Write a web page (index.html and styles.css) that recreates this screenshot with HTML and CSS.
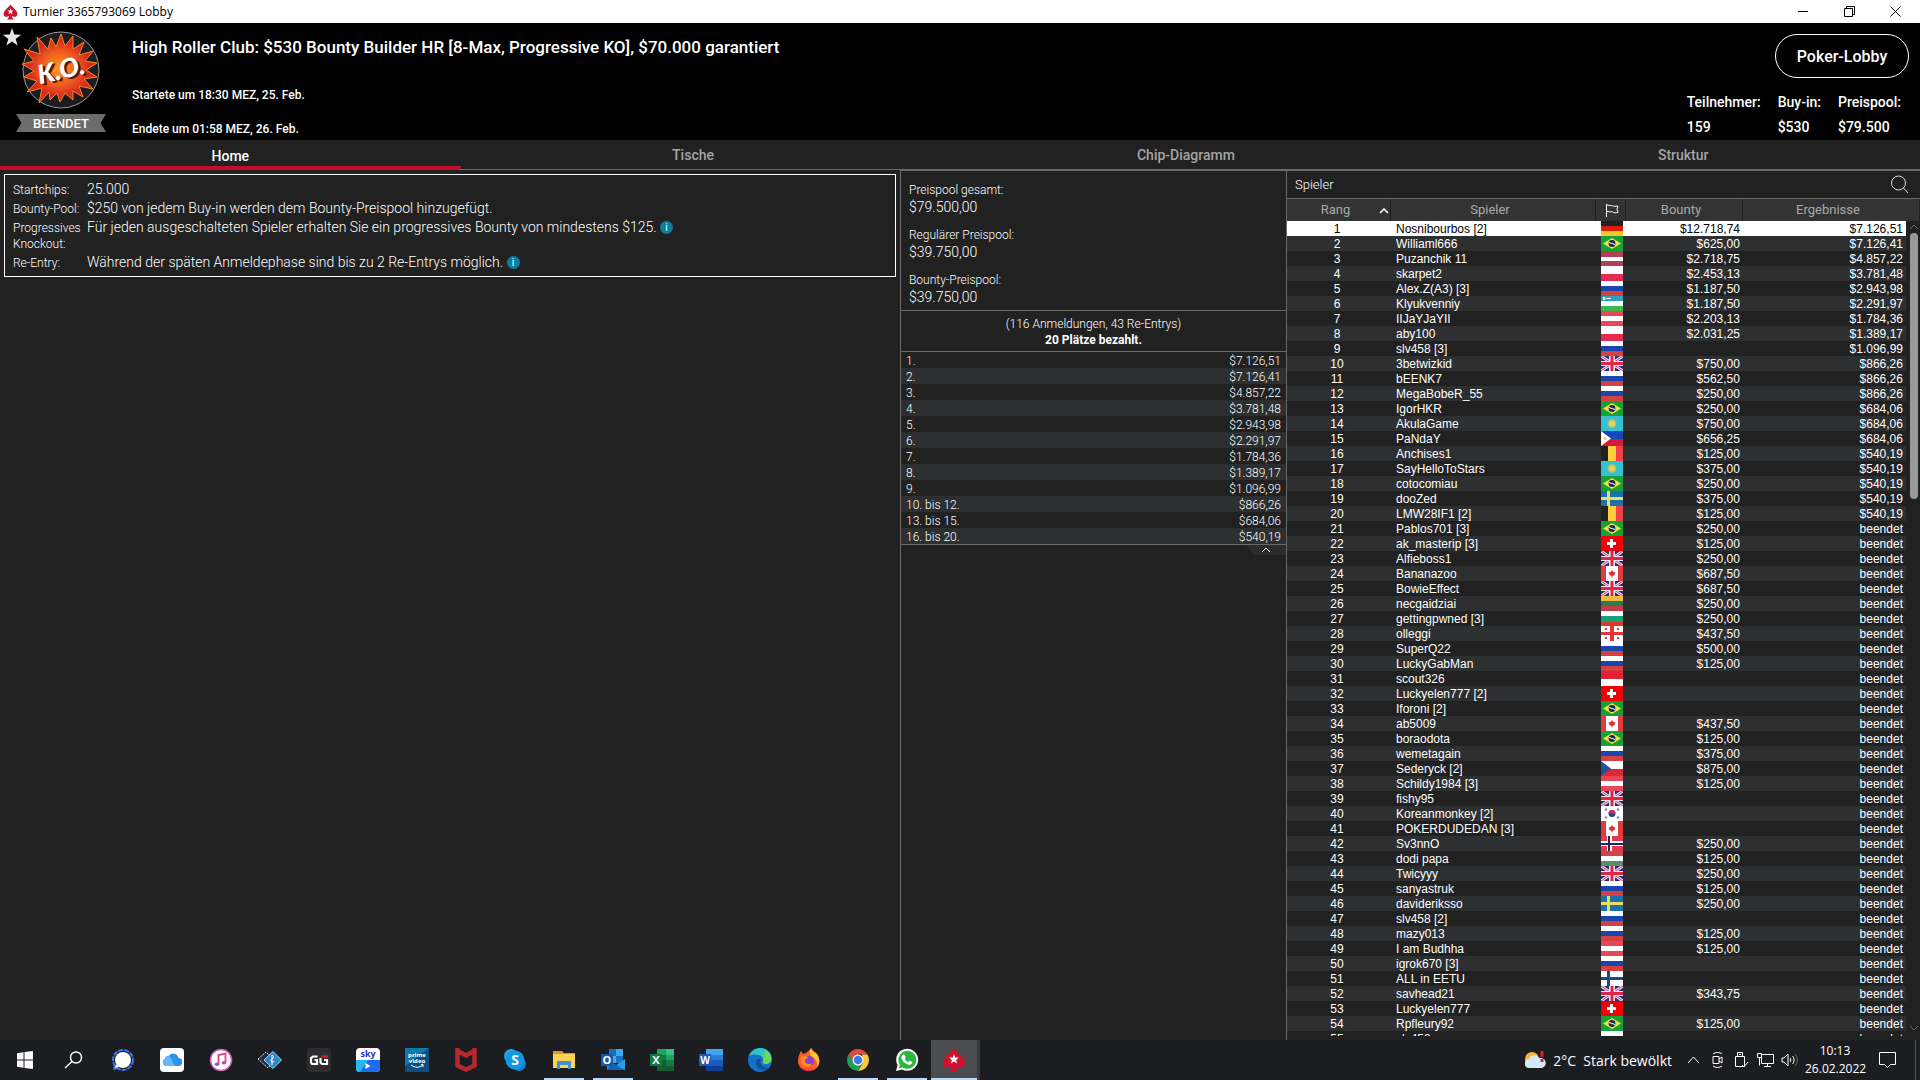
FILE: index.html
```html
<!DOCTYPE html>
<html lang="de">
<head>
    <meta charset="UTF-8">
    <meta name="viewport" content="width=device-width, initial-scale=1.0">
    <title>Turnier 3365793069 Lobby</title>
    <link rel="stylesheet" href="styles.css">
</head>
<body>

    <!-- Symbole und Flaggen -->
    <svg class="sprite" aria-hidden="true">
        <symbol id="spade" viewBox="0 0 24 24">
            <path fill="#d0102c" d="M12 0C10 4 1 9 1 15c0 5 6 6 9 3-.4 2.500-1.500 4.500-3.500 6h11c-2-1.500-3.100-3.500-3.500-6 3 3 9 2 9-3 0-6-9-11-11-15z"/>
            <path fill="#fff" d="M12 6l1.300 3.400 3.600.2-2.800 2.300 1 3.500-3.100-2-3.100 2 1-3.500-2.800-2.300 3.600-.2z"/>
        </symbol>
        <symbol id="de" viewBox="0 0 22 15"><path fill="#222" d="M0 0h22v5H0z"/><path fill="#dd1c0c" d="M0 5h22v5H0z"/><path fill="#f9c728" d="M0 10h22v5H0z"/></symbol>
        <symbol id="br" viewBox="0 0 22 15"><path fill="#17a037" d="M0 0h22v15H0z"/><path fill="#eee045" d="M11 2l9 5.500-9 5.500-9-5.500z"/><circle cx="11" cy="7.500" r="3.400" fill="#1b2a50"/><path stroke="#fff" d="M8 6.500l6 2"/></symbol>
        <symbol id="lv" viewBox="0 0 22 15"><path fill="#b04350" d="M0 0h22v15H0z"/><path fill="#fff" d="M0 6h22v4H0z"/></symbol>
        <symbol id="pl" viewBox="0 0 22 15"><path fill="#fff" d="M0 0h22v8H0z"/><path fill="#e52b50" d="M0 8h22v7H0z"/></symbol>
        <symbol id="ru" viewBox="0 0 22 15"><path fill="#fff" d="M0 0h22v5H0z"/><path fill="#1846ae" d="M0 5h22v5H0z"/><path fill="#d6403f" d="M0 10h22v5H0z"/></symbol>
        <symbol id="uz" viewBox="0 0 22 15"><path fill="#28a4c0" d="M0 0h22v5H0z"/><path fill="#fff" d="M0 5h22v5H0zM2 1h2v3H2zM5 2h5v1H5z"/><path fill="#3db54a" d="M0 10h22v5H0z"/></symbol>
        <symbol id="at" viewBox="0 0 22 15"><path fill="#e8475a" d="M0 0h22v15H0z"/><path fill="#fff" d="M0 5h22v5H0z"/></symbol>
        <symbol id="gb" viewBox="0 0 22 15"><path fill="#232a80" d="M0 0h22v15H0z"/><path stroke="#e9dff0" stroke-width="3" d="M0 0l22 15M22 0L0 15"/><path stroke="#d84260" d="M0 0l22 15M22 0L0 15"/><path fill="#f0e6f0" d="M8 0h6v15H8zM0 5h22v5H0z"/><path fill="#dc2844" d="M9.500 0h3v15h-3zM0 6h22v3H0z"/></symbol>
        <symbol id="kz" viewBox="0 0 22 15"><path fill="#37bfd2" d="M0 0h22v15H0z"/><circle cx="11" cy="7.500" r="4.500" fill="#93ca8a"/><circle cx="11" cy="7.500" r="3" fill="#f2d04e"/></symbol>
        <symbol id="ph" viewBox="0 0 22 15"><path fill="#1448bf" d="M0 0h22v8H0z"/><path fill="#d41c37" d="M0 8h22v7H0z"/><path fill="#fff" d="M0 0l10 7.500L0 15z"/><circle cx="4" cy="7.500" r="1.500" fill="#f1cf77"/></symbol>
        <symbol id="be" viewBox="0 0 22 15"><path fill="#222" d="M0 0h7v15H0z"/><path fill="#fbd03c" d="M7 0h8v15H7z"/><path fill="#f04048" d="M15 0h7v15h-7z"/></symbol>
        <symbol id="se" viewBox="0 0 22 15"><path fill="#1b71ad" d="M0 0h22v15H0z"/><path fill="#eddb62" d="M6 0h3v15H6zM0 6h22v3H0z"/></symbol>
        <symbol id="ch" viewBox="0 0 22 15"><path fill="#f00008" d="M0 0h22v15H0z"/><path fill="#fff" d="M9 3h3v9H9zM6 6h9v3H6z"/></symbol>
        <symbol id="ca" viewBox="0 0 22 15"><path fill="#e23b3b" d="M0 0h22v15H0z"/><path fill="#fff" d="M5 0h12v15H5z"/><path fill="#df3038" d="M11 4l1.500 2 2 .5-1 2.500-2 1v1.500h-1V10l-2-1-1-2.500 2-.5z"/></symbol>
        <symbol id="lt" viewBox="0 0 22 15"><path fill="#f5b942" d="M0 0h22v5H0z"/><path fill="#28804c" d="M0 5h22v5H0z"/><path fill="#c43c48" d="M0 10h22v5H0z"/></symbol>
        <symbol id="bg" viewBox="0 0 22 15"><path fill="#fff" d="M0 0h22v5H0z"/><path fill="#18a078" d="M0 5h22v6H0z"/><path fill="#d63a2c" d="M0 11h22v4H0z"/></symbol>
        <symbol id="ge" viewBox="0 0 22 15"><path fill="#fff" d="M0 0h22v15H0z"/><path fill="#e8333c" d="M9 0h4v15H9zM0 6h22v3H0zM4 2h2v2H4zM16 2h2v2h-2zM4 11h2v2H4zM16 11h2v2h-2z"/></symbol>
        <symbol id="mc" viewBox="0 0 22 15"><path fill="#df2338" d="M0 0h22v8H0z"/><path fill="#fff" d="M0 8h22v7H0z"/></symbol>
        <symbol id="cz" viewBox="0 0 22 15"><path fill="#fff" d="M0 0h22v8H0z"/><path fill="#dc2933" d="M0 8h22v7H0z"/><path fill="#21529a" d="M0 0l10 7.500L0 15z"/></symbol>
        <symbol id="kr" viewBox="0 0 22 15"><path fill="#fff" d="M0 0h22v15H0z"/><circle cx="11" cy="7.500" r="3.500" fill="#24449a"/><path fill="#d2304a" d="M7.500 7.500a3.500 3.500 0 0 1 7 0c-2 1.500-4-1-7 0z"/><path stroke="#888" stroke-width="2" d="M4 4l2-1M16 3l2 1M4 11l2 1M16 12l2-1"/></symbol>
        <symbol id="no" viewBox="0 0 22 15"><path fill="#e23b4c" d="M0 0h22v15H0z"/><path fill="#fff" d="M6 0h5v15H6zM0 5h22v5H0z"/><path fill="#1d2a68" d="M7 0h2v15H7zM0 7h22v2H0z"/></symbol>
        <symbol id="hu" viewBox="0 0 22 15"><path fill="#d34450" d="M0 0h22v5H0z"/><path fill="#fff" d="M0 5h22v5H0z"/><path fill="#5c8d66" d="M0 10h22v5H0z"/></symbol>
        <symbol id="fi" viewBox="0 0 22 15"><path fill="#fff" d="M0 0h22v15H0z"/><path fill="#174a8c" d="M6 0h3v15H6zM0 6h22v3H0z"/></symbol>
    </svg>

    <div class="titlebar">
        <svg class="titlebar-icon"><use href="#spade"/></svg>
        <span class="titlebar-text">Turnier 3365793069 Lobby</span>
        <div class="window-buttons">
            <button type="button" aria-label="Minimieren"><svg width="11" height="11" viewBox="0 0 11 11"><path d="M0 5.500h10"/></svg></button>
            <button type="button" aria-label="Verkleinern"><svg width="11" height="11" viewBox="0 0 11 11"><path d="M.5 2.500h8v8h-8zM2.500 2.500v-2h8v8h-2"/></svg></button>
            <button type="button" aria-label="Schließen"><svg width="11" height="11" viewBox="0 0 11 11"><path d="M.5.5l10 10M10.500.5l-10 10"/></svg></button>
        </div>
    </div>

    <header class="header">
        <svg class="favorite" viewBox="0 0 18 18"><path fill="#e6e6e6" d="M9 0l2.300 6.600 6.700.1-5.300 4.200 1.900 6.600L9 13.600l-5.600 3.900 1.900-6.600L0 6.700l6.700-.1z"/></svg>
        <div class="badge">
            <svg class="ko" viewBox="0 0 78 78">
                <defs>
                    <radialGradient id="fire"><stop offset="0" stop-color="#ffa01e"/><stop offset=".5" stop-color="#ee5a20"/><stop offset=".8" stop-color="#d92a1c"/></radialGradient>
                </defs>
                <circle cx="39" cy="39" r="38" fill="#1d1d1f" stroke="#9a9a9a"/>
                <path fill="url(#fire)" stroke="#f08a20" d="M39 3l4 12 8-10v13l11-7-5 13 14-4-8 10 12 2-11 7 11 7-13 2 9 10-14-3 4 11-10-6v9l-8-7-5 9-3-9-7 7-1-8-10 11 3-15-15 4 10-11-13-4 10-6-12-7 12-3-10-12 16 5-3-17 11 12 3-11 5 9z"/>
                <g class="ko-text" transform="rotate(-13 39 39)">
                    <text x="41" y="50" fill="#5a1206">K.O.</text>
                    <text x="39" y="48" fill="#fff">K.O.</text>
                </g>
            </svg>
            <span class="ribbon">BEENDET</span>
        </div>
        <div class="info">
            <h1>High Roller Club: $530 Bounty Builder HR [8-Max, Progressive KO], $70.000 garantiert</h1>
            <p>Startete um 18:30 MEZ, 25. Feb.</p>
            <p>Endete um 01:58 MEZ, 26. Feb.</p>
        </div>
        <div class="summary">
            <button type="button" class="lobby-button">Poker-Lobby</button>
            <dl class="stats">
                <div><dt>Teilnehmer:</dt><dd>159</dd></div>
                <div><dt>Buy-in:</dt><dd>$530</dd></div>
                <div><dt>Preispool:</dt><dd>$79.500</dd></div>
            </dl>
        </div>
    </header>

    <nav class="tabs">
        <a href="#home" class="active">Home</a>
        <a href="#tische">Tische</a>
        <a href="#chips">Chip-Diagramm</a>
        <a href="#struktur">Struktur</a>
    </nav>

    <main class="content">
        <section class="details">
            <dl class="rules">
                <dt>Startchips:</dt>
                <dd>25.000</dd>
                <dt>Bounty-Pool:</dt>
                <dd>$250 von jedem Buy-in werden dem Bounty-Preispool hinzugefügt.</dd>
                <dt>Progressives<br>Knockout:</dt>
                <dd>Für jeden ausgeschalteten Spieler erhalten Sie ein progressives Bounty von mindestens $125. <button type="button" class="tip">i</button></dd>
                <dt>Re-Entry:</dt>
                <dd>Während der späten Anmeldephase sind bis zu 2 Re-Entrys möglich. <button type="button" class="tip">i</button></dd>
            </dl>
        </section>

        <section class="prizes">
            <dl class="pools">
                <dt>Preispool gesamt:</dt><dd>$79.500,00</dd>
                <dt>Regulärer Preispool:</dt><dd>$39.750,00</dd>
                <dt>Bounty-Preispool:</dt><dd>$39.750,00</dd>
            </dl>
            <div class="entries">
                <p>(116 Anmeldungen, 43 Re-Entrys)</p>
                <p><strong>20 Plätze bezahlt.</strong></p>
            </div>
            <table class="payouts">
                <tr><td>1.</td><td>$7.126,51</td></tr>
                <tr><td>2.</td><td>$7.126,41</td></tr>
                <tr><td>3.</td><td>$4.857,22</td></tr>
                <tr><td>4.</td><td>$3.781,48</td></tr>
                <tr><td>5.</td><td>$2.943,98</td></tr>
                <tr><td>6.</td><td>$2.291,97</td></tr>
                <tr><td>7.</td><td>$1.784,36</td></tr>
                <tr><td>8.</td><td>$1.389,17</td></tr>
                <tr><td>9.</td><td>$1.096,99</td></tr>
                <tr><td>10. bis 12.</td><td>$866,26</td></tr>
                <tr><td>13. bis 15.</td><td>$684,06</td></tr>
                <tr><td>16. bis 20.</td><td>$540,19</td></tr>
            </table>
            <button type="button" class="collapse" aria-label="Einklappen">
                <svg width="10" height="6" viewBox="0 0 10 6"><path fill="none" stroke="#fff" d="M1 5l4-4 4 4"/></svg>
            </button>
        </section>

        <section class="players">
            <div class="players-bar">
                <h2>Spieler</h2>
                <button type="button" aria-label="Suchen">
                    <svg width="19" height="19" viewBox="0 0 19 19"><g fill="none" stroke="#ddd"><circle cx="8.500" cy="8" r="7"/><path d="M13.500 13l4.500 5"/></g></svg>
                </button>
            </div>
            <div class="list">
                <table class="ranking">
                    <colgroup>
                        <col class="col-rank"><col><col class="col-flag"><col class="col-bounty"><col class="col-result"><col class="col-scroll">
                    </colgroup>
                    <thead>
                        <tr>
                            <th>Rang<svg class="sort" viewBox="0 0 10 6"><path fill="none" stroke="#fff" stroke-width="1.500" d="M1 5l4-4 4 4"/></svg></th>
                            <th>Spieler</th>
                            <th><svg class="flag-head" viewBox="0 0 14 13"><path fill="none" stroke="#fff" d="M1.500 13V.5c3 1.500 5 1 6 1.200 1 1 3 .5 5.500.3l-1 3.200 1 3.300c-2.500.5-4 .5-5.500-.7-2-.3-4 .2-6-.3"/></svg></th>
                            <th>Bounty</th>
                            <th colspan="2">Ergebnisse</th>
                        </tr>
                    </thead>
                    <tbody id="ranking"></tbody>
                </table>
                <div class="scrollbar">
                    <svg width="10" height="6" viewBox="0 0 10 6"><path fill="none" stroke="#666" d="M1 5l4-4 4 4"/></svg>
                    <div class="thumb"></div>
                    <svg width="10" height="6" viewBox="0 0 10 6"><path fill="none" stroke="#666" d="M1 1l4 4 4-4"/></svg>
                </div>
            </div>
        </section>
    </main>

    <footer class="taskbar">
        <div class="apps">
            <button type="button" aria-label="Start"><svg viewBox="0 0 24 24"><path fill="#fff" d="M4 5.200l6.500-1v7.300H4zM11.500 4L20 3v8.500h-8.500zM4 12.500h6.500v7.300l-6.500-1zM11.500 12.500H20V21l-8.500-1z"/></svg></button>
            <button type="button" aria-label="Suche"><svg viewBox="0 0 24 24"><g fill="none" stroke="#fff" stroke-width="1.400"><circle cx="14" cy="9.500" r="5.500"/><path d="M10 13.500L3 20"/></g></svg></button>
            <button type="button" aria-label="Signal"><svg viewBox="0 0 24 24"><circle cx="12" cy="12" r="10" fill="none" stroke="#3a76f0" stroke-width="2" stroke-dasharray="5 1"/><path fill="#3a76f0" d="M2 22l1-6 5 5z"/><circle cx="12" cy="12" r="8" fill="#fff"/><path fill="#fff" d="M4 20l1-4 3 3z"/></svg></button>
            <button type="button" aria-label="iCloud"><svg viewBox="0 0 24 24"><rect width="24" height="24" rx="4" fill="#fff"/><path fill="#2f93ea" d="M6 18a4 4 0 0 1-1-7.500 3 3 0 0 1 3.500-2.500 5.500 5.500 0 0 1 10 2A4 4 0 0 1 18 18z"/><path fill="#62b9f8" d="M6 18a4 4 0 0 1-1-7.500 3 3 0 0 1 3.500-2.500c4 1 3 8 8 10z"/></svg></button>
            <button type="button" aria-label="iTunes"><svg viewBox="0 0 24 24"><circle cx="12" cy="12" r="10.500" fill="#fff" stroke="#d45cc0" stroke-width="1.500"/><path fill="none" stroke="#e0408c" stroke-width="1.800" d="M9.500 16V7l7-1.500V14"/><ellipse cx="8" cy="16.300" rx="2.300" ry="1.800" fill="#7a5cf0"/><ellipse cx="15" cy="14.800" rx="2.300" ry="1.800" fill="#e0408c"/></svg></button>
            <button type="button" aria-label="Medien"><svg viewBox="0 0 24 24"><path fill="#1f2f3f" stroke="#cfe3f0" stroke-dasharray="2 1" d="M0 11l8-7 9 8-7 8z"/><path fill="#2f86c6" stroke="#a8d8f4" d="M6 12l9-8.500 8.500 8.500-8.500 8.500z"/><path fill="none" stroke="#fff" d="M14 17V7l2 2-3 3c-1 2 3 3 3 1"/></svg></button>
            <button type="button" aria-label="GG"><svg viewBox="0 0 24 24"><rect width="24" height="24" rx="3" fill="#2d2d2d"/><path fill="none" stroke="#fff" stroke-width="2.200" d="M10.500 8.500H6L4 10v4.500L5 16h5v-4H7.500M20 12h-3M20 11v5h-5l-1.500-1.500V10"/><path stroke="#d22" stroke-width="2.200" d="M14 8.500h7"/></svg></button>
            <button type="button" aria-label="Sky"><svg viewBox="0 0 24 24"><rect width="24" height="24" rx="4" fill="#fff"/><path fill="#1b6cf0" d="M0 12h24v8a4 4 0 0 1-4 4H4a4 4 0 0 1-4-4z"/><path fill="#28b6f4" d="M0 12h12L4 24a4 4 0 0 1-4-4z"/><path fill="#fff" d="M9.500 15l5 3-5 3z"/><text class="logo-text" x="12" y="9" font-size="9" fill="#2b30c8">sky</text></svg></button>
            <button type="button" aria-label="Prime Video"><svg viewBox="0 0 24 24"><path fill="#0c4f7e" d="M0 0h24v24H0z"/><path fill="#1279a8" d="M0 0h24L0 18z"/><text class="logo-text" x="12" y="9" font-size="6" fill="#fff">prime</text><text class="logo-text" x="12" y="15" font-size="6" fill="#fff">video</text><path fill="none" stroke="#fff" d="M6 17c4 3 8 3 12 0M18 19v-2.500h-2"/></svg></button>
            <button type="button" aria-label="McAfee"><svg viewBox="0 0 24 24"><path fill="none" stroke="#b5282f" stroke-width="4.500" d="M3.500 0v17.500L12 21.500l8.500-4V0M2 2l10 5.500L22 2"/></svg></button>
            <button type="button" aria-label="Skype"><svg viewBox="0 0 24 24"><circle cx="8" cy="8" r="7" fill="#17a8ea"/><circle cx="16" cy="16" r="7" fill="#0a7fd4"/><circle cx="12" cy="12" r="9.500" fill="#1298e2"/><text class="logo-text" x="12" y="17" font-size="14" fill="#fff">S</text></svg></button>
            <button type="button" class="open" aria-label="Explorer"><svg viewBox="0 0 24 24"><path fill="#d99c1c" d="M1 3h9l2 2h11v4H1z"/><path fill="#fbd15c" d="M1 6h22v14H1z"/><path fill="#3e93cf" d="M5 13h14v8h-3v-4H8v4H5z"/></svg></button>
            <button type="button" class="open" aria-label="Outlook"><svg viewBox="0 0 24 24"><path fill="#1a6fc0" d="M8 1h14v14H8z"/><path fill="#41a8ea" d="M15 1h7v7h-7zM8 8h7v7H8z"/><path fill="#2a9be6" d="M6 13l9 4 9-6v11H6z"/><path fill="#1268b8" d="M6 22h18L10 14z"/><path fill="#0f5cab" d="M0 6h12v12H0z"/><text class="logo-text" x="6" y="16" font-size="11" fill="#fff">O</text></svg></button>
            <button type="button" aria-label="Excel"><svg viewBox="0 0 24 24"><path fill="#21a366" d="M7 1h17v6H7z"/><path fill="#33c481" d="M16 1h8v6h-8z"/><path fill="#107c41" d="M7 7h17v5H7z"/><path fill="#21a366" d="M16 7h8v5h-8z"/><path fill="#185c37" d="M7 12h17v11H7z"/><path fill="#107c41" d="M16 12h8v6h-8zM0 6h12v12H0z"/><text class="logo-text" x="6" y="16" font-size="11" fill="#fff">X</text></svg></button>
            <button type="button" aria-label="Word"><svg viewBox="0 0 24 24"><path fill="#41a5ee" d="M7 1h17v6H7z"/><path fill="#2b7cd3" d="M7 7h17v5H7z"/><path fill="#185abd" d="M7 12h17v6H7zM0 6h12v12H0z"/><path fill="#103f91" d="M7 18h17v5H7z"/><text class="logo-text" x="6" y="16" font-size="10" fill="#fff">W</text></svg></button>
            <button type="button" aria-label="Edge"><svg viewBox="0 0 24 24"><circle cx="12" cy="12" r="12" fill="#1372c4"/><path fill="#35c1c8" d="M1 8C4-1 16-3 22 5c3 5 1 11-4 11-3 0-4-1-3-3 1-3-2-6-6-6-4-1-6 0-8 1z"/><path fill="#6bd858" d="M17 2c7 4 9 13 2 14-4 0-5-1-4-3 1-4 1-8 2-11z"/><path fill="#0f4f9c" d="M9 11c-3 5 1 11 8 11 2 0 4-1 5-3-4 2-8 0-9-3-1-2-1-3 0-5z"/></svg></button>
            <button type="button" aria-label="Firefox"><svg viewBox="0 0 24 24"><path fill="#ff5a2c" d="M1 13C1 8 3 5 4 3l2 3 3-1c2-2 5-4 6-5 0 3 4 4 6 7 3 7 1 16-9 16C6 23 1 19 1 13z"/><path fill="#ffc52e" d="M14 0c0 3 5 4 7 8 2 4 2 8-1 11 1-7-3-9-6-11-2-3-2-6 0-8z"/><circle cx="12" cy="13" r="5" fill="#8040d8"/><path fill="#ff8a20" d="M4 9c3-2 6-1 8 1-2 0-4 1-4 3 0 3 5 4 7 2-1 4-5 5-8 3-3-2-4-5-3-9z"/><path fill="#e8286c" d="M2 17c4 5 11 6 16 3-6 5-14 3-16-3z"/></svg></button>
            <button type="button" class="open" aria-label="Chrome"><svg viewBox="0 0 24 24"><path fill="#dd4b3e" d="M2.500 6.500a11 11 0 0 1 19 0H12L7.500 14z"/><path fill="#fbc934" d="M21.500 6.500A11 11 0 0 1 12 23l5-8.500-1-8z"/><path fill="#229d56" d="M2.500 6.500A11 11 0 0 0 12 23l4.500-8H8z"/><circle cx="12" cy="12" r="5.500" fill="#fff"/><circle cx="12" cy="12" r="4.300" fill="#3b7de8"/></svg></button>
            <button type="button" class="open" aria-label="WhatsApp"><svg viewBox="0 0 24 24"><path fill="#fff" d="M1 23l1.600-5.800A11 11 0 1 1 7 21.500z"/><path fill="#2cb742" d="M3.800 20.300l1-3.600A9 9 0 1 1 7.500 19.400z"/><path fill="#fff" d="M8 6.500l1.500.2 1.200 2.800-1 1.400c1 1.700 2 2.500 3.600 3.200l1.300-1.400 2.700 1.300c.2 2-1.800 3-3.500 2.700-4-.8-7-4.200-7.300-7.200 0-1.500.8-2.600 1.500-3z"/></svg></button>
            <button type="button" class="open current" aria-label="PokerStars"><svg><use href="#spade"/></svg></button>
        </div>
        <div class="tray">
            <svg class="weather-icon" viewBox="0 0 21 18"><circle cx="7" cy="8" r="7" fill="#f5b83d"/><path fill="#d4e8f8" d="M4 17a4.500 4.500 0 0 1 0-9 5.500 5.500 0 0 1 10-1 5 5 0 0 1 3 10z"/><path stroke="#d0203c" stroke-width="3" d="M17 0v6M17 8v3"/></svg>
            <span class="weather">2°C&nbsp; Stark bewölkt</span>
            <svg class="tray-icon" viewBox="0 0 13 18"><path d="M1 12l5.500-6L12 12"/></svg>
            <svg class="tray-icon" viewBox="0 0 11 18"><path d="M1 5.500h6v7H1zM7 8l3-2v6l-3-2M1 3c2-2 7-2 9 0M1 15c2 2 7 2 9 0"/></svg>
            <svg class="tray-icon" viewBox="0 0 15 18"><path d="M3.500 5.500v-4h5v4M1.500 5.500h9v10h-9zM5 3.500h2M8 14l2 2 4-5"/></svg>
            <svg class="tray-icon" viewBox="0 0 17 18"><path d="M4.500 3.500h12v9h-12zM7 15.500h7M10.500 12.500v3M.5 2.500h4v4h-4zM2.500 6.500v8"/></svg>
            <svg class="tray-icon" viewBox="0 0 17 18"><path d="M1 7h2l4-4v12l-4-4H1zM9 7c1 1 1 3 0 4M11.500 5c2 2 2 6 0 8"/><path class="faint" d="M14 3c3 3 3 9 0 12"/></svg>
            <div class="clock"><span>10:13</span><span>26.02.2022</span></div>
            <svg class="tray-icon" viewBox="0 0 17 18"><path d="M.5 1.500h16v12h-5l-3 3-3-3h-5z"/></svg>
        </div>
    </footer>

    <script src="script.js"></script>
</body>
</html>
```
FILE: styles.css
```css
/* Grundeinstellungen */
* {
    box-sizing: border-box;
}

body {
    display: flex;
    flex-direction: column;
    height: 100vh;
    margin: 0;
    overflow: hidden;
    background: #212121;
    color: #fff;
    font-family: Roboto, Arial, sans-serif;
    font-size: 12px;
}

h1, h2, p, dl, dd {
    margin: 0;
}

button {
    padding: 0;
    border: none;
    background: none;
    color: inherit;
    font-family: inherit;
    cursor: pointer;
}

svg {
    display: block;
}

.sprite {
    position: absolute;
    width: 0;
    height: 0;
}

/* Titelleiste */
.titlebar {
    display: flex;
    align-items: center;
    flex: none;
    height: 23px;
    padding: 0 19px 0 3px;
    background: #fff;
    color: #000;
}

.titlebar-icon {
    width: 15px;
    height: 16px;
    margin-right: 5px;
}

.titlebar-text {
    flex: 1;
    font-family: "Open Sans", sans-serif;
    font-size: 12px;
}

.window-buttons {
    display: flex;
    gap: 35px;
}

.window-buttons path {
    fill: none;
    stroke: #000;
}

/* Kopfbereich */
.header {
    position: relative;
    display: flex;
    flex: none;
    height: 117px;
    background: #000;
    font-weight: 500;
}

.favorite {
    position: absolute;
    top: 5px;
    left: 3px;
    width: 18px;
    height: 18px;
}

.badge {
    display: flex;
    flex-direction: column;
    align-items: center;
    gap: 5px;
    width: 122px;
    padding-top: 8px;
}

.ko {
    width: 78px;
    height: 78px;
}

.ko-text {
    font-family: Lato, sans-serif;
    font-size: 26px;
    font-weight: 900;
    font-style: italic;
    text-anchor: middle;
}

.ribbon {
    width: 90px;
    padding-top: 1px;
    background: #6c6c6c;
    clip-path: polygon(0 0, 100% 0, 94% 50%, 100% 100%, 0 100%, 6% 50%);
    font-size: 13px;
    line-height: 17px;
    text-align: center;
}

.info {
    flex: 1;
    padding: 12px 10px 0;
}

.info h1 {
    margin-bottom: 24px;
    font-size: 17px;
    font-weight: 500;
    line-height: 24px;
}

.info p {
    margin-bottom: 10px;
    font-size: 12px;
    line-height: 24px;
}

.summary {
    display: flex;
    flex-direction: column;
    align-items: flex-end;
    padding: 11px 11px 0 0;
}

.lobby-button {
    width: 134px;
    height: 44px;
    border: 1px solid #fff;
    border-radius: 22px;
    font-size: 16px;
    font-weight: 500;
}

.stats {
    display: flex;
    gap: 17px;
    padding: 12px 8px 0 0;
    font-size: 14px;
    line-height: 25px;
}

/* Reiter */
.tabs {
    display: flex;
    flex: none;
    height: 30px;
    border-bottom: 1px solid #6a6a6a;
}

.tabs a {
    flex: 1 1 auto;
    color: #a4a4a4;
    font-size: 14px;
    font-weight: 500;
    line-height: 30px;
    text-align: center;
    text-decoration: none;
}

.tabs .active {
    height: 30px;
    border-bottom: 4px solid #c40d2a;
    border-bottom-right-radius: 4px;
    color: #fff;
    line-height: 32px;
}

/* Inhalt */
.content {
    display: grid;
    grid-template-columns: 900fr 386fr 634fr;
    flex: 1;
    min-height: 0;
}

.details {
    padding: 4px 4px 0;
}

.rules {
    display: grid;
    grid-template-columns: 68px 1fr;
    column-gap: 6px;
    padding: 5px 8px 4px;
    border: 1px solid #fff;
    font-weight: 300;
    line-height: 16px;
    white-space: nowrap;
}

.rules dt {
    padding: 2px 0 1px;
}

.rules dd {
    font-size: 14px;
    line-height: 19px;
}

.tip {
    width: 13px;
    height: 13px;
    border-radius: 50%;
    background: #0c7f9e;
    font-size: 10px;
    line-height: 13px;
    vertical-align: 1px;
}

.prizes {
    border-top: 1px solid #6a6a6a;
    border-left: 1px solid #6a6a6a;
    font-weight: 300;
}

.pools {
    height: 139px;
    padding: 11px 8px 0;
    line-height: 16px;
}

.pools dd {
    margin-bottom: 11px;
    font-size: 14px;
    line-height: 18px;
}

.entries {
    padding: 5px 0 3px;
    border-top: 1px solid #6a6a6a;
    border-bottom: 1px solid #6a6a6a;
    line-height: 16px;
    text-align: center;
}

.entries strong {
    font-weight: 700;
}

.payouts {
    width: 100%;
    border-bottom: 1px solid #6a6a6a;
    border-spacing: 0;
    font-size: 12px;
    line-height: 14px;
}

.payouts td {
    padding: 2px 5px 0;
}

.payouts td:last-child {
    text-align: right;
}

.payouts tr:nth-child(even) {
    background: #2d2f31;
}

.collapse {
    display: flex;
    align-items: center;
    justify-content: center;
    width: 40px;
    height: 10px;
    margin-left: auto;
    background: #2c2c2c;
    clip-path: polygon(0 0, 100% 0, 100% 100%, 20% 100%);
}

/* Spielerliste */
.players {
    display: flex;
    flex-direction: column;
    min-height: 0;
    padding-bottom: 4px;
    border-top: 1px solid #6a6a6a;
    border-left: 1px solid #6a6a6a;
}

.players-bar {
    display: flex;
    align-items: center;
    justify-content: space-between;
    flex: none;
    height: 28px;
    padding: 0 11px 0 8px;
    border-bottom: 1px solid #6a6a6a;
}

.players-bar h2 {
    font-size: 13px;
    font-weight: 300;
}

.list {
    position: relative;
    flex: 1;
    min-height: 0;
    overflow: hidden;
}

.ranking {
    width: 100%;
    border-spacing: 0;
    table-layout: fixed;
    font-family: "Liberation Sans", Arial, sans-serif;
    font-size: 12px;
    line-height: 14px;
    white-space: nowrap;
}

.col-rank { width: 104px; }
.col-flag { width: 30px; }
.col-bounty { width: 117px; }
.col-result { width: 163px; }
.col-scroll { width: 14px; }

.ranking th {
    position: relative;
    height: 22px;
    padding: 0 6px 0 0;
    border-right: 1px solid #1f1f1f;
    background: #333;
    color: #aaa;
    font-family: Roboto, Arial, sans-serif;
    font-size: 13px;
    font-weight: 400;
}

.ranking td {
    height: 15px;
    padding: 1px 5px 0;
}

.ranking tr:nth-child(even) td {
    background: #2d2f31;
}

.ranking tr:first-child td {
    background: #fff;
    color: #000;
}

.ranking td:nth-child(1) {
    padding-right: 9px;
    text-align: center;
}

.ranking td:nth-child(3) {
    padding-top: 0;
}

.ranking td:nth-child(4),
.ranking td:nth-child(5) {
    padding-right: 3px;
    text-align: right;
}

.ranking tr td:last-child {
    background: #212121;
}

.sort {
    position: absolute;
    top: 9px;
    right: 1px;
    width: 10px;
    height: 6px;
}

.flag-head {
    width: 14px;
    height: 13px;
    margin-left: 9px;
}

.flag {
    width: 22px;
    height: 15px;
}

.scrollbar {
    position: absolute;
    top: 22px;
    right: 0;
    bottom: 0;
    display: flex;
    flex-direction: column;
    align-items: center;
    width: 13px;
    padding: 3px 0 5px;
}

.thumb {
    width: 8px;
    height: 33%;
    margin: 3px 0 auto;
    border-radius: 4px;
    background: #999;
}

/* Taskleiste */
.taskbar {
    display: flex;
    justify-content: space-between;
    flex: none;
    height: 40px;
    background: #1c1d20;
    font-family: "Open Sans", sans-serif;
}

.apps {
    display: flex;
}

.apps button {
    display: flex;
    align-items: center;
    justify-content: center;
    width: 49px;
    padding: 0 4px;
}

.apps svg {
    width: 24px;
    height: 24px;
}

.apps .open {
    background: linear-gradient(#b9d9f5, #b9d9f5) center bottom / 40px 2px no-repeat;
}

.apps .current {
    background: linear-gradient(#b9d9f5, #b9d9f5) center bottom / 100% 2px no-repeat, #4a4c51;
    border-right: 3px solid #36383c;
}

.logo-text {
    font-family: "Open Sans", sans-serif;
    font-weight: 700;
    text-anchor: middle;
}

.tray {
    display: flex;
    align-items: center;
    gap: 7px;
    margin-right: 4px;
    padding-right: 19px;
    border-right: 1px solid #55565a;
}

.weather-icon {
    width: 21px;
    height: 18px;
}

.tray-icon {
    width: 17px;
    height: 18px;
    fill: none;
    stroke: #fff;
}

.faint {
    stroke: #777;
}

.weather {
    margin-right: 6px;
    font-size: 14px;
}

.clock {
    display: flex;
    flex-direction: column;
    width: 60px;
    margin-right: 7px;
    line-height: 18px;
    text-align: center;
}
```
FILE: script.js
```js
// Rang ergibt sich aus der Reihenfolge: Name, Flagge, Bounty, Ergebnis
const players = [
    ["Nosnibourbos [2]", "de", "$12.718,74", "$7.126,51"],
    ["Williaml666", "br", "$625,00", "$7.126,41"],
    ["Puzanchik 11", "lv", "$2.718,75", "$4.857,22"],
    ["skarpet2", "pl", "$2.453,13", "$3.781,48"],
    ["Alex.Z(A3) [3]", "ru", "$1.187,50", "$2.943,98"],
    ["Klyukvenniy", "uz", "$1.187,50", "$2.291,97"],
    ["IIJaYJaYII", "at", "$2.203,13", "$1.784,36"],
    ["aby100", "pl", "$2.031,25", "$1.389,17"],
    ["slv458 [3]", "ru", "", "$1.096,99"],
    ["3betwizkid", "gb", "$750,00", "$866,26"],
    ["bEENK7", "ru", "$562,50", "$866,26"],
    ["MegaBobeR_55", "ru", "$250,00", "$866,26"],
    ["IgorHKR", "br", "$250,00", "$684,06"],
    ["AkulaGame", "kz", "$750,00", "$684,06"],
    ["PaNdaY", "ph", "$656,25", "$684,06"],
    ["Anchises1", "be", "$125,00", "$540,19"],
    ["SayHelloToStars", "kz", "$375,00", "$540,19"],
    ["cotocomiau", "br", "$250,00", "$540,19"],
    ["dooZed", "se", "$375,00", "$540,19"],
    ["LMW28IF1 [2]", "be", "$125,00", "$540,19"],
    ["Pablos701 [3]", "br", "$250,00"],
    ["ak_masterip [3]", "ch", "$125,00"],
    ["Alfieboss1", "gb", "$250,00"],
    ["Bananazoo", "ca", "$687,50"],
    ["BowieEffect", "gb", "$687,50"],
    ["necgaidziai", "lt", "$250,00"],
    ["gettingpwned [3]", "bg", "$250,00"],
    ["olleggi", "ge", "$437,50"],
    ["SuperQ22", "ru", "$500,00"],
    ["LuckyGabMan", "ru", "$125,00"],
    ["scout326", "mc", ""],
    ["Luckyelen777 [2]", "ch", ""],
    ["Iforoni [2]", "br", ""],
    ["ab5009", "ca", "$437,50"],
    ["boraodota", "br", "$125,00"],
    ["wemetagain", "ru", "$375,00"],
    ["Sederyck [2]", "cz", "$875,00"],
    ["Schildy1984 [3]", "at", "$125,00"],
    ["fishy95", "gb", ""],
    ["Koreanmonkey [2]", "kr", ""],
    ["POKERDUDEDAN [3]", "ca", ""],
    ["Sv3nnO", "no", "$250,00"],
    ["dodi papa", "hu", "$125,00"],
    ["Twicyyy", "gb", "$250,00"],
    ["sanyastruk", "ru", "$125,00"],
    ["davideriksso", "se", "$250,00"],
    ["slv458 [2]", "ru", ""],
    ["mazy013", "ru", "$125,00"],
    ["I am Budhha", "at", "$125,00"],
    ["igrok670 [3]", "ru", ""],
    ["ALL in EETU", "fi", ""],
    ["savhead21", "gb", "$343,75"],
    ["Luckyelen777", "ch", ""],
    ["Rpfleury92", "br", "$125,00"],
    ["slv458", "ru", ""]
];

document.getElementById("ranking").innerHTML = players.map((p, i) => `
    <tr>
        <td>${i + 1}</td>
        <td>${p[0]}</td>
        <td><svg class="flag"><use href="#${p[1]}"/></svg></td>
        <td>${p[2]}</td>
        <td>${p[3] || "beendet"}</td>
        <td></td>
    </tr>`).join("");
```
